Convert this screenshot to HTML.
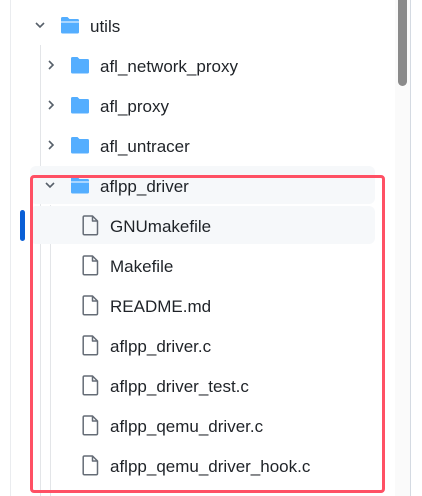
<!DOCTYPE html>
<html><head><style>
body{margin:0;width:422px;height:496px;background:#fff;position:relative;overflow:hidden;font-family:"Liberation Sans",sans-serif;font-size:17px;color:#1f2328}
.a{position:absolute}
.row{position:absolute;height:40px;line-height:44px;white-space:nowrap}
svg{position:absolute}
</style></head><body>
<div class="a" style="left:10px;top:0;width:1px;height:496px;background:#eaecef"></div>
<div class="a" style="left:40px;top:45px;width:1px;height:451px;background:#e3e5e8"></div>
<div class="a" style="left:50px;top:205px;width:1px;height:291px;background:#e3e5e8"></div>
<div class="a" style="left:30px;top:166px;width:345px;height:38px;background:#f6f8fa;border-radius:6px"></div>
<div class="a" style="left:30px;top:206px;width:345px;height:38px;background:#f6f8fa;border-radius:6px"></div>
<div class="a" style="left:20px;top:210px;width:5px;height:31px;background:#0a5fd6;border-radius:3px"></div>
<div class="a" style="left:395px;top:0;width:15px;height:496px;background:#fafafa"></div>
<div class="a" style="left:410px;top:0;width:1px;height:496px;background:#d4dae2"></div>
<div class="a" style="left:398px;top:0;width:9px;height:86px;background:#8a8a8a;border-radius:0 0 5px 5px"></div>

<svg style="left:34px;top:19px" width="12" height="12" viewBox="0 0 12 12"><path d="M2 4l4 4 4-4" fill="none" stroke="#57606a" stroke-width="1.6"/></svg>
<svg style="left:60px;top:15px" width="20" height="20" viewBox="0 0 20 20"><path d="M1 3.5a1.5 1.5 0 0 1 1.5-1.5h5l2 2h8a1.5 1.5 0 0 1 1.5 1.5V17a1.5 1.5 0 0 1-1.5 1.5h-15A1.5 1.5 0 0 1 1 17z" fill="#54aeff"/><path d="M1 7h18" stroke="#fff" stroke-width="1"/></svg>
<div class="row" style="left:90px;top:5px">utils</div>

<svg style="left:45px;top:59px" width="12" height="12" viewBox="0 0 12 12"><path d="M4 2l4 4-4 4" fill="none" stroke="#57606a" stroke-width="1.6"/></svg>
<svg style="left:70px;top:55px" width="20" height="20" viewBox="0 0 20 20"><path d="M1 3.5a1.5 1.5 0 0 1 1.5-1.5h5l2 2h8a1.5 1.5 0 0 1 1.5 1.5V17a1.5 1.5 0 0 1-1.5 1.5h-15A1.5 1.5 0 0 1 1 17z" fill="#54aeff"/></svg>
<div class="row" style="left:100px;top:45px">afl_network_proxy</div>

<svg style="left:45px;top:99px" width="12" height="12" viewBox="0 0 12 12"><path d="M4 2l4 4-4 4" fill="none" stroke="#57606a" stroke-width="1.6"/></svg>
<svg style="left:70px;top:95px" width="20" height="20" viewBox="0 0 20 20"><path d="M1 3.5a1.5 1.5 0 0 1 1.5-1.5h5l2 2h8a1.5 1.5 0 0 1 1.5 1.5V17a1.5 1.5 0 0 1-1.5 1.5h-15A1.5 1.5 0 0 1 1 17z" fill="#54aeff"/></svg>
<div class="row" style="left:100px;top:85px">afl_proxy</div>

<svg style="left:45px;top:139px" width="12" height="12" viewBox="0 0 12 12"><path d="M4 2l4 4-4 4" fill="none" stroke="#57606a" stroke-width="1.6"/></svg>
<svg style="left:70px;top:135px" width="20" height="20" viewBox="0 0 20 20"><path d="M1 3.5a1.5 1.5 0 0 1 1.5-1.5h5l2 2h8a1.5 1.5 0 0 1 1.5 1.5V17a1.5 1.5 0 0 1-1.5 1.5h-15A1.5 1.5 0 0 1 1 17z" fill="#54aeff"/></svg>
<div class="row" style="left:100px;top:125px">afl_untracer</div>

<svg style="left:44px;top:179px" width="12" height="12" viewBox="0 0 12 12"><path d="M2 4l4 4 4-4" fill="none" stroke="#57606a" stroke-width="1.6"/></svg>
<svg style="left:70px;top:175px" width="20" height="20" viewBox="0 0 20 20"><path d="M1 3.5a1.5 1.5 0 0 1 1.5-1.5h5l2 2h8a1.5 1.5 0 0 1 1.5 1.5V17a1.5 1.5 0 0 1-1.5 1.5h-15A1.5 1.5 0 0 1 1 17z" fill="#54aeff"/><path d="M1 7h18" stroke="#fff" stroke-width="1"/></svg>
<div class="row" style="left:100px;top:165px">aflpp_driver</div>

<svg style="left:82px;top:215px" width="17" height="21" viewBox="0 0 17 21"><path d="M2.5 1h8l5 5v12.5a1.3 1.3 0 0 1-1.3 1.3H2.5a1.3 1.3 0 0 1-1.3-1.3V2.3A1.3 1.3 0 0 1 2.5 1zM10.5 1v5h5" fill="none" stroke="#656c76" stroke-width="1.5" stroke-linejoin="round"/></svg>
<div class="row" style="left:110px;top:205px">GNUmakefile</div>
<svg style="left:82px;top:255px" width="17" height="21" viewBox="0 0 17 21"><path d="M2.5 1h8l5 5v12.5a1.3 1.3 0 0 1-1.3 1.3H2.5a1.3 1.3 0 0 1-1.3-1.3V2.3A1.3 1.3 0 0 1 2.5 1zM10.5 1v5h5" fill="none" stroke="#656c76" stroke-width="1.5" stroke-linejoin="round"/></svg>
<div class="row" style="left:110px;top:245px">Makefile</div>
<svg style="left:82px;top:295px" width="17" height="21" viewBox="0 0 17 21"><path d="M2.5 1h8l5 5v12.5a1.3 1.3 0 0 1-1.3 1.3H2.5a1.3 1.3 0 0 1-1.3-1.3V2.3A1.3 1.3 0 0 1 2.5 1zM10.5 1v5h5" fill="none" stroke="#656c76" stroke-width="1.5" stroke-linejoin="round"/></svg>
<div class="row" style="left:110px;top:285px">README.md</div>
<svg style="left:82px;top:335px" width="17" height="21" viewBox="0 0 17 21"><path d="M2.5 1h8l5 5v12.5a1.3 1.3 0 0 1-1.3 1.3H2.5a1.3 1.3 0 0 1-1.3-1.3V2.3A1.3 1.3 0 0 1 2.5 1zM10.5 1v5h5" fill="none" stroke="#656c76" stroke-width="1.5" stroke-linejoin="round"/></svg>
<div class="row" style="left:110px;top:325px">aflpp_driver.c</div>
<svg style="left:82px;top:375px" width="17" height="21" viewBox="0 0 17 21"><path d="M2.5 1h8l5 5v12.5a1.3 1.3 0 0 1-1.3 1.3H2.5a1.3 1.3 0 0 1-1.3-1.3V2.3A1.3 1.3 0 0 1 2.5 1zM10.5 1v5h5" fill="none" stroke="#656c76" stroke-width="1.5" stroke-linejoin="round"/></svg>
<div class="row" style="left:110px;top:365px">aflpp_driver_test.c</div>
<svg style="left:82px;top:415px" width="17" height="21" viewBox="0 0 17 21"><path d="M2.5 1h8l5 5v12.5a1.3 1.3 0 0 1-1.3 1.3H2.5a1.3 1.3 0 0 1-1.3-1.3V2.3A1.3 1.3 0 0 1 2.5 1zM10.5 1v5h5" fill="none" stroke="#656c76" stroke-width="1.5" stroke-linejoin="round"/></svg>
<div class="row" style="left:110px;top:405px">aflpp_qemu_driver.c</div>
<svg style="left:82px;top:455px" width="17" height="21" viewBox="0 0 17 21"><path d="M2.5 1h8l5 5v12.5a1.3 1.3 0 0 1-1.3 1.3H2.5a1.3 1.3 0 0 1-1.3-1.3V2.3A1.3 1.3 0 0 1 2.5 1zM10.5 1v5h5" fill="none" stroke="#656c76" stroke-width="1.5" stroke-linejoin="round"/></svg>
<div class="row" style="left:110px;top:445px">aflpp_qemu_driver_hook.c</div>

<div class="a" style="left:30px;top:175px;width:349px;height:312px;border:3px solid #ff5064;border-radius:4px"></div>
</body></html>
